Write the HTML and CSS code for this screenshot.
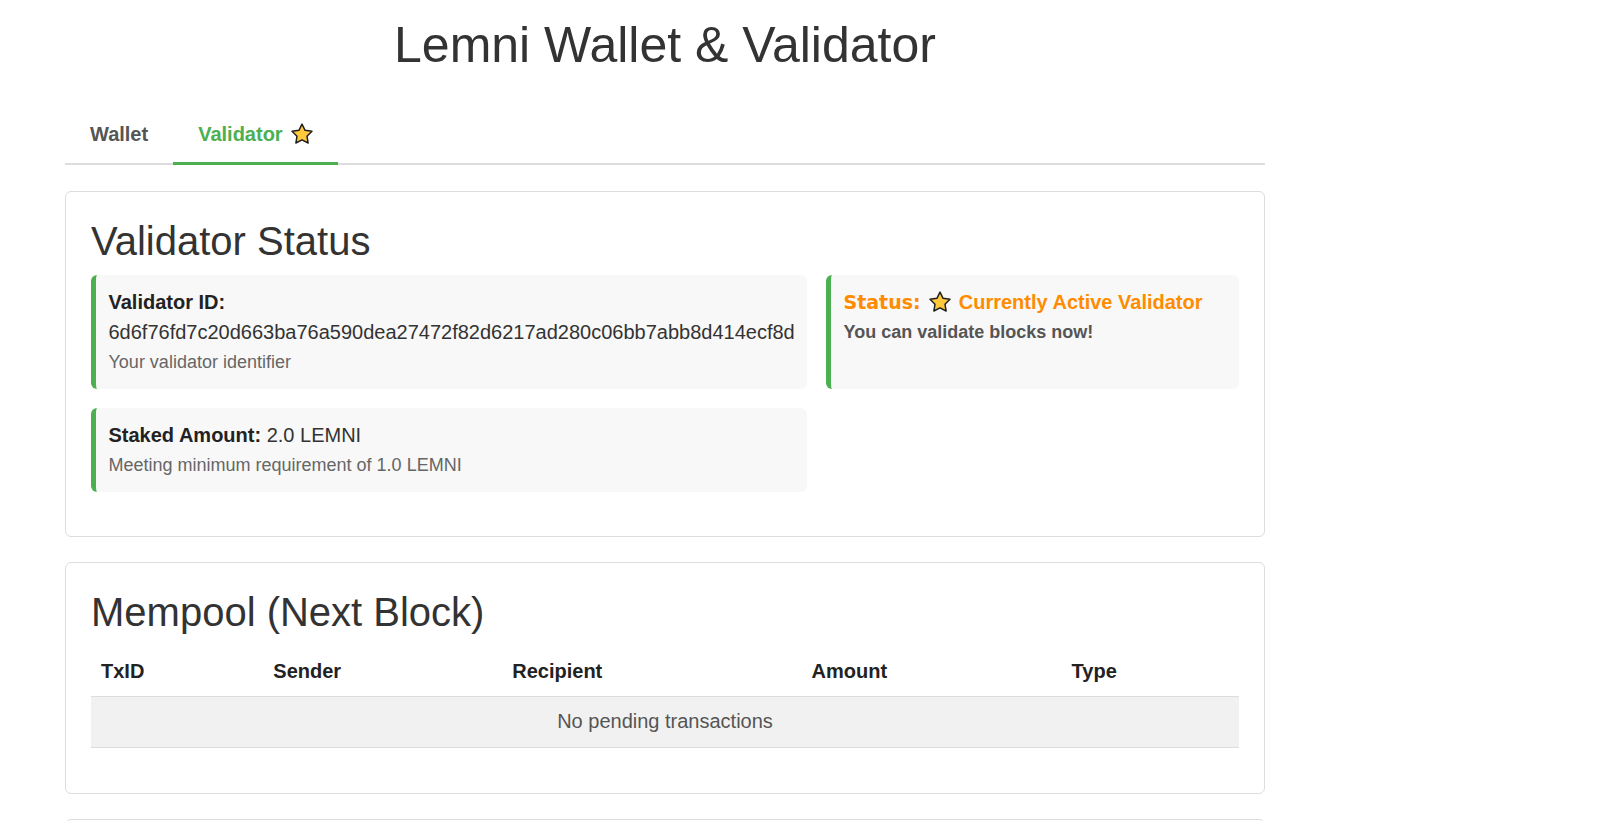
FILE: index.html
```html
<!DOCTYPE html>
<html lang="en">
<head>
<meta charset="utf-8">
<title>Lemni Wallet &amp; Validator</title>
<link rel="stylesheet" href="styles.css">
</head>
<body>
<div class="container">
  <h1 class="title">Lemni Wallet &amp; Validator</h1>

  <div class="tabs">
    <button class="tab">Wallet</button>
    <button class="tab active">Validator <svg class="star" viewBox="1.5 1.5 21 20" width="22" height="21" aria-hidden="true"><path d="M12 2.5 L14.94 8.45 L21.51 9.41 L16.76 14.05 L17.88 20.59 L12 17.5 L6.12 20.59 L7.24 14.05 L2.49 9.41 L9.06 8.45 Z"/></svg></button>
  </div>

  <section class="card">
    <h2 class="card-title">Validator Status</h2>
    <div class="info-grid">
      <div class="info-box">
        <div class="line label">Validator ID:</div>
        <div class="line value">6d6f76fd7c20d663ba76a590dea27472f82d6217ad280c06bb7abb8d414ecf8d</div>
        <div class="line hint">Your validator identifier</div>
      </div>
      <div class="info-box">
        <div class="line status"><span class="status-key">Status:</span> <svg class="star star-status" viewBox="1.5 1.5 21 20" width="22" height="21" aria-hidden="true"><path d="M12 2.5 L14.94 8.45 L21.51 9.41 L16.76 14.05 L17.88 20.59 L12 17.5 L6.12 20.59 L7.24 14.05 L2.49 9.41 L9.06 8.45 Z"/></svg> Currently Active Validator</div>
        <div class="line sub">You can validate blocks now!</div>
      </div>
      <div class="info-box">
        <div class="line"><span class="label">Staked Amount:</span> 2.0 LEMNI</div>
        <div class="line hint">Meeting minimum requirement of 1.0 LEMNI</div>
      </div>
    </div>
  </section>

  <section class="card">
    <h2 class="card-title">Mempool (Next Block)</h2>
    <table class="tx-table">
      <thead>
        <tr>
          <th>TxID</th>
          <th>Sender</th>
          <th>Recipient</th>
          <th>Amount</th>
          <th>Type</th>
        </tr>
      </thead>
      <tbody>
        <tr class="empty-row">
          <td colspan="5">No pending transactions</td>
        </tr>
      </tbody>
    </table>
  </section>

  <section class="card">
    <h2 class="card-title">Recent Blocks</h2>
    <p class="hint">No blocks yet</p>
  </section>
</div>
</body>
</html>
```

FILE: styles.css
```css
* {
  box-sizing: border-box;
}

body {
  margin: 0;
  background: #ffffff;
  color: #333333;
  font-family: "Liberation Sans", Arial, Helvetica, sans-serif;
  font-size: 20px;
}

.container {
  width: 1200px;
  margin-left: 65px;
}

.title {
  margin: 17px 0 34px;
  font-size: 50px;
  font-weight: 400;
  line-height: 57px;
  text-align: center;
  color: #333333;
}

/* Tabs */
.tabs {
  display: flex;
  border-bottom: 2px solid #dddddd;
  margin-bottom: 26px;
}

.tab {
  margin: 0 0 -2px;
  padding: 15px 25px 16px;
  border: 0;
  border-bottom: 3px solid transparent;
  background: none;
  font-family: inherit;
  font-size: 20px;
  font-weight: 700;
  line-height: 23px;
  color: #555555;
  cursor: pointer;
}

.tab.active {
  color: #4caf50;
  border-bottom-color: #4caf50;
}

.star {
  display: inline-block;
  vertical-align: -3px;
  margin-left: 3px;
}

.star path {
  fill: #ffc83d;
  stroke: #1e1e1e;
  stroke-width: 1.4;
  stroke-linejoin: round;
}

.star-status {
  margin: 0 2px 0 3px;
}

/* Cards */
.card {
  border: 1px solid #dddddd;
  border-radius: 6px;
  padding: 25px;
  margin-bottom: 25px;
}

.card-title {
  margin: 0 0 10px;
  font-size: 40px;
  font-weight: 400;
  line-height: 48px;
  color: #333333;
}

.info-grid {
  display: grid;
  grid-template-columns: max-content 1fr;
  gap: 19px 18.75px;
  margin-bottom: 19px;
}

.info-box {
  background: #f8f8f8;
  border-left: 5px solid #4caf50;
  border-radius: 6px;
  padding: 12px 12.5px;
}

.line {
  line-height: 30px;
  white-space: nowrap;
}

.label {
  font-weight: 700;
  color: #222222;
}

.value {
  color: #333333;
}

.hint {
  font-size: 18px;
  color: #666666;
}

.status {
  font-weight: 700;
  color: #ff8c00;
}

.status-key {
  font-family: "DejaVu Sans", "Liberation Sans", sans-serif;
  font-size: 19px;
  font-weight: 700;
}

.sub {
  font-size: 18px;
  font-weight: 700;
  color: #555555;
}

/* Table */
.tx-table {
  width: 100%;
  border-collapse: collapse;
  margin-bottom: 20px;
}

.tx-table th {
  padding: 14px 10px 13px;
  text-align: left;
  font-weight: 700;
  line-height: 23px;
  color: #222222;
  border-bottom: 1px solid #dddddd;
}

.tx-table td {
  padding: 13px 10px 14px;
  line-height: 23px;
  border-bottom: 1px solid #dddddd;
}

.empty-row td {
  background: #f1f1f1;
  text-align: center;
  color: #555555;
}
```
